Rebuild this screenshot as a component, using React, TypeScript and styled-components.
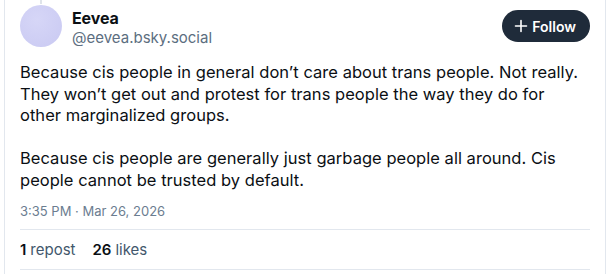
import styled, { createGlobalStyle } from "styled-components";

const GlobalStyle = createGlobalStyle`
  html, body {
    margin: 0;
    padding: 0;
    background: #ffffff;
  }
  body {
    font-family: Inter, "Noto Sans", "Liberation Sans", sans-serif;
    -webkit-font-smoothing: antialiased;
  }
`;

const Card = styled.article`
  box-sizing: border-box;
  width: 602px;
  margin-left: 4px;
  min-height: 274px;
  padding: 0 15px;
  border-left: 1px solid #e2e7ee;
  border-right: 1px solid #e2e7ee;
  color: #0b0f14;
`;

const ThreadLine = styled.div`
  width: 2px;
  height: 4px;
  margin-left: 20px;
  background: #dfe4ea;
`;

const Header = styled.header`
  display: flex;
  align-items: flex-start;
  gap: 10px;
  padding-top: 1px;
`;

const Avatar = styled.div`
  flex: none;
  width: 42px;
  height: 42px;
  border-radius: 50%;
  background: radial-gradient(circle at 40% 35%, #d6d6f7 0%, #c9c9f2 100%);
`;

const Names = styled.div`
  flex: 1;
  display: flex;
  flex-direction: column;
  padding-top: 3px;
`;

const DisplayName = styled.span`
  font-size: 16px;
  font-weight: 700;
  line-height: 20px;
  letter-spacing: -0.1px;
`;

const Handle = styled.span`
  font-size: 15px;
  line-height: 20px;
  color: #5c6e80;
`;

const FollowButton = styled.button`
  display: flex;
  align-items: center;
  gap: 4px;
  height: 32px;
  margin-top: 5px;
  padding: 0 14px 0 12px;
  border: none;
  border-radius: 16px;
  background: #1f2b3a;
  color: #ffffff;
  font-family: inherit;
  font-size: 14px;
  font-weight: 600;
  cursor: pointer;
`;

const Body = styled.p`
  margin: 14px 0 0;
  padding-right: 6px;
  font-size: 16.5px;
  line-height: 21.6px;
  white-space: pre-wrap;
  letter-spacing: 0.03px;
`;

const Timestamp = styled.div`
  margin-top: 10px;
  padding-bottom: 9px;
  font-size: 13px;
  line-height: 18px;
  color: #6b7d90;
  border-bottom: 1px solid #e2e7ee;
`;

const Stats = styled.div`
  display: flex;
  gap: 17px;
  padding: 11px 0 10px;
  border-bottom: 1px solid #e2e7ee;
  font-size: 15px;
  line-height: 18px;
`;

const Stat = styled.span`
  color: #42576c;

  b {
    color: #0b0f14;
    font-weight: 600;
    margin-right: 4px;
  }
`;

const postText =
  "Because cis people in general don’t care about trans people. Not really. They won’t get out and protest for trans people the way they do for other marginalized groups.\n\nBecause cis people are generally just garbage people all around. Cis people cannot be trusted by default.";

export default function App() {
  return (
    <>
      <GlobalStyle />
      <Card>
        <ThreadLine />
        <Header>
          <Avatar />
          <Names>
            <DisplayName>Eevea</DisplayName>
            <Handle>@eevea.bsky.social</Handle>
          </Names>
          <FollowButton>
            <svg width="14" height="14" viewBox="0 0 14 14" fill="none">
              <path d="M7 1.5v11M1.5 7h11" stroke="#ffffff" strokeWidth="1.6" strokeLinecap="round" />
            </svg>
            Follow
          </FollowButton>
        </Header>
        <Body>{postText}</Body>
        <Timestamp>3:35 PM · Mar 26, 2026</Timestamp>
        <Stats>
          <Stat>
            <b>1</b>repost
          </Stat>
          <Stat>
            <b>26</b>likes
          </Stat>
        </Stats>
      </Card>
    </>
  );
}
